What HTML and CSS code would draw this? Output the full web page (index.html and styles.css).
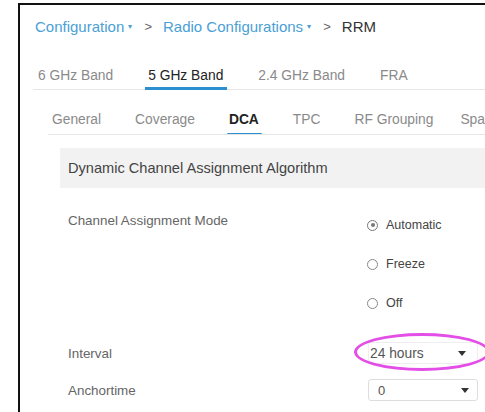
FILE: index.html
```html
<!DOCTYPE html>
<html lang="en">
<head>
<meta charset="utf-8">
<title>RRM - DCA</title>
<link rel="stylesheet" href="styles.css">
</head>
<body>
<div class="frame">
  <nav class="crumbs">
    <a class="crumb">Configuration <span class="caret">&#9662;</span></a>
    <span class="sep">&gt;</span>
    <a class="crumb">Radio Configurations <span class="caret">&#9662;</span></a>
    <span class="sep">&gt;</span>
    <span class="crumb-current">RRM</span>
  </nav>

  <div class="band-tabs">
    <span class="band-tab">6 GHz Band</span>
    <span class="band-tab active">5 GHz Band</span>
    <span class="band-tab">2.4 GHz Band</span>
    <span class="band-tab">FRA</span>
  </div>

  <div class="sub-tabs">
    <span class="sub-tab">General</span>
    <span class="sub-tab">Coverage</span>
    <span class="sub-tab active">DCA</span>
    <span class="sub-tab">TPC</span>
    <span class="sub-tab">RF Grouping</span>
    <span class="sub-tab">Spatial Reuse</span>
  </div>

  <section class="panel">
    <h3 class="panel-title">Dynamic Channel Assignment Algorithm</h3>

    <div class="row mode-row">
      <label class="label">Channel Assignment Mode</label>
      <div class="radios">
        <label class="radio"><span class="dot checked"></span>Automatic</label>
        <label class="radio"><span class="dot"></span>Freeze</label>
        <label class="radio"><span class="dot"></span>Off</label>
      </div>
    </div>

    <div class="row interval-row">
      <label class="label">Interval</label>
      <div class="select-wrap">
        <div class="select interval">
          <span>24 hours</span>
          <svg class="arrow" width="8" height="5" viewBox="0 0 8 5"><path d="M0 0h8L4 5z" fill="#333"/></svg>
        </div>
        <span class="highlight"></span>
      </div>
    </div>

    <div class="row anchor-row">
      <label class="label">Anchortime</label>
      <div class="select">
        <span>0</span>
        <svg class="arrow" width="8" height="5" viewBox="0 0 8 5"><path d="M0 0h8L4 5z" fill="#333"/></svg>
      </div>
    </div>
  </section>
</div>
</body>
</html>
```

FILE: styles.css
```css
html, body {
  margin: 0;
  background: #fff;
  overflow: hidden;
}

body {
  font-family: "Liberation Sans", Arial, sans-serif;
  color: #555;
}

.frame {
  margin: 3px 0 0 18px;
  border-top: 2px solid #111;
  border-left: 2px solid #111;
  height: 420px;
  box-sizing: border-box;
}

/* breadcrumb */
.crumbs {
  display: flex;
  align-items: center;
  padding: 12px 0 0 15px;
  height: 18px;
  font-size: 15px;
  white-space: nowrap;
}

.crumb {
  color: #4a9fd5;
}

.caret {
  font-size: 8px;
  color: #4a9fd5;
  position: relative;
  top: -3px;
}

.sep {
  color: #666;
  margin: 0 11px 0 12px;
  font-size: 13px;
}

.crumb-current {
  color: #333;
}

/* band tabs */
.band-tabs {
  display: flex;
  margin: 33px 0 0 13px;
  padding-left: 2px;
  border-bottom: 1px solid #e6e6e6;
  font-size: 13.8px;
  white-space: nowrap;
}

.band-tab {
  color: #8a8a8a;
  padding: 0 4px 6px 3px;
  margin-right: 28px;
  position: relative;
}

.band-tab.active {
  color: #222;
}

.band-tab.active::after {
  content: "";
  position: absolute;
  left: 0;
  right: 0;
  bottom: -1px;
  height: 3px;
  background: #2b8fd0;
}

/* sub tabs */
.sub-tabs {
  display: flex;
  margin: 22px 0 0 28px;
  border-bottom: 1px solid #e6e6e6;
  font-size: 13.8px;
  white-space: nowrap;
  overflow: hidden;
}

.sub-tab {
  color: #8a8a8a;
  padding: 0 3px 7px 4px;
  margin-right: 27px;
  position: relative;
}

.sub-tab:nth-last-child(2) {
  margin-right: 20px;
}

.sub-tab.active {
  color: #222;
  font-weight: bold;
}

.sub-tab.active::after {
  content: "";
  position: absolute;
  left: 2px;
  right: 0;
  bottom: -2px;
  height: 3px;
  border-radius: 1px;
  background: #2b8fd0;
}

/* DCA panel */
.panel {
  margin: 13px 0 0 40px;
}

.panel-title {
  margin: 0;
  background: #f2f2f2;
  font-weight: normal;
  font-size: 14.6px;
  color: #444;
  height: 40px;
  line-height: 40px;
  padding-left: 8px;
  white-space: nowrap;
}

.row {
  display: flex;
  padding-left: 8px;
}

.label {
  width: 300px;
  font-size: 13.4px;
  color: #666;
}

.mode-row {
  margin-top: 25px;
}

.radios {
  display: flex;
  flex-direction: column;
  gap: 23px;
  padding-top: 4px;
}

.radio {
  display: flex;
  align-items: center;
  font-size: 12.5px;
  color: #444;
  height: 16px;
}

.dot {
  width: 11px;
  height: 11px;
  border: 1px solid #888;
  border-radius: 50%;
  margin-right: 8px;
  margin-left: -1px;
  box-sizing: border-box;
  position: relative;
}

.dot.checked {
  border-color: #777;
}

.dot.checked::after {
  content: "";
  position: absolute;
  left: 2.5px;
  top: 2.5px;
  width: 4px;
  height: 4px;
  border-radius: 50%;
  background: #777;
}

.interval-row {
  margin-top: 31px;
  align-items: center;
}

.anchor-row {
  margin-top: 15px;
  align-items: center;
}

.select-wrap {
  position: relative;
}

.select {
  width: 110px;
  height: 22px;
  box-sizing: border-box;
  border: 1px solid #ddd;
  border-radius: 3px;
  display: flex;
  align-items: center;
  justify-content: space-between;
  padding: 0 8px 0 9px;
  font-size: 13px;
  color: #555;
}

.select.interval {
  border-color: #eee;
  padding-left: 1px;
  padding-right: 11px;
  font-size: 13.8px;
}

.arrow {
  display: block;
}

.highlight {
  position: absolute;
  left: -14px;
  top: -9px;
  width: 130px;
  height: 32px;
  border: 3px solid #e34ee6;
  border-radius: 50%;
  pointer-events: none;
}
```
